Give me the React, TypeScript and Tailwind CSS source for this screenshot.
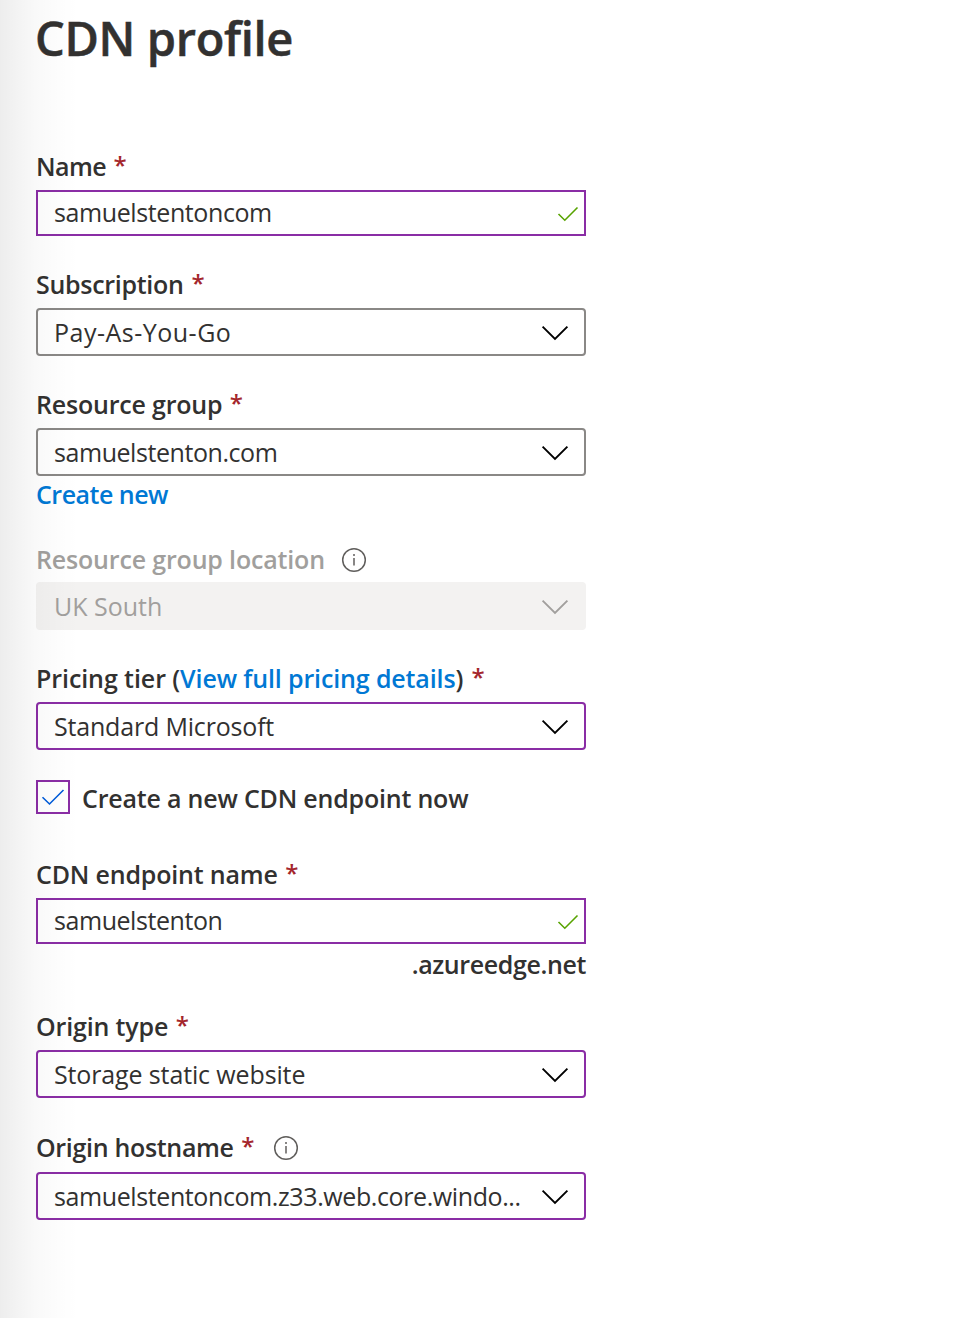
import type { ReactNode } from "react";
import clsx from "clsx";

function Star({ className }: { className?: string }) {
  return <span className={clsx("-mt-px self-start text-[24px]/[36px] font-semibold text-[#a4262c]", className ?? "ml-[7.5px]")}>*</span>;
}

function Label({ children, className }: { children: ReactNode; className?: string }) {
  return (
    <div className={clsx("flex h-9 items-baseline whitespace-pre text-[25px]/[36px] font-semibold", className)}>
      {children}
    </div>
  );
}

function Info({ className }: { className?: string }) {
  return (
    <svg className={clsx("mt-0.5 h-[26px] w-[26px] shrink-0 self-center", className)} viewBox="0 0 26 26" fill="none">
      <circle cx="13" cy="13" r="11.3" stroke="#605e5c" strokeWidth="1.5" />
      <path d="M13 11v7.5" stroke="#605e5c" strokeWidth="1.5" />
      <circle cx="13" cy="8" r="1" fill="#605e5c" />
    </svg>
  );
}

function TextField({ children }: { children: ReactNode }) {
  return (
    <div className="flex h-[46px] items-start justify-between border-2 border-[#8a2da5] pt-0.5 pr-[5px] pl-4 text-[25px]/[36px]">
      {children}
      <svg className="mt-[11px] h-[18px] w-[22px]" viewBox="0 0 22 18" fill="none">
        <path d="M1.5 9 7.8 15.2 20.5 2.5" stroke="#57a300" strokeWidth="1.6" />
      </svg>
    </div>
  );
}

function Select({ children, tone }: { children: ReactNode; tone: "grey" | "purple" | "disabled" }) {
  return (
    <div
      className={clsx(
        "flex h-12 items-center justify-between rounded-[4px] border-2 pr-[15px] pl-4 text-[25px]/[36px]",
        tone === "grey" && "border-[#8a8886]",
        tone === "purple" && "border-[#8a2da5]",
        tone === "disabled" && "border-[#f3f2f1] bg-[#f3f2f1] text-[#a19f9d]",
      )}
    >
      {children}
      <svg className="mt-0.5 h-4 w-[28px] shrink-0" viewBox="0 0 28 16" fill="none">
        <path
          d="M1.6 1.6 14 13.9 26.4 1.6"
          stroke={tone === "disabled" ? "#a19f9d" : "#000000"}
          strokeWidth="1.9"
        />
      </svg>
    </div>
  );
}

export default function App() {
  return (
    <main className="relative h-[1318px] w-[960px] overflow-hidden bg-white pt-[5px] pl-9 font-['Open_Sans','Noto_Sans',sans-serif] text-[#323130]">
      <h1 className="-ml-px text-[47px]/[66px] font-semibold tracking-[-0.35px] [-webkit-text-stroke:0.5px_#323130]">
        CDN profile
      </h1>

      <form className="mt-[77px] flex w-[550px] flex-col">
        <Label className="mb-1.5">
          <span className="tracking-[-0.58px]">Name</span>
          <Star />
        </Label>
        <TextField>
          <span className="tracking-[-0.4px]">samuelstentoncom</span>
        </TextField>

        <Label className="mt-[30px] mb-1.5">
          <span className="tracking-[-0.3px]">Subscription</span>
          <Star className="ml-2" />
        </Label>
        <Select tone="grey">
          <span className="tracking-[0.5px]">Pay-As-You-Go</span>
        </Select>

        <Label className="mt-[30px] mb-1.5">
          <span className="tracking-[-0.2px]">Resource group</span>
          <Star />
        </Label>
        <Select tone="grey">
          <span className="tracking-[-0.44px]">samuelstenton.com</span>
        </Select>
        <Label className="text-[#0078d4]">
          <a className="tracking-[-0.5px]">Create new</a>
        </Label>

        <Label className="mt-[29px] mb-[5px]">
          <span className="tracking-[-0.17px] text-[#a19f9d]">Resource group location</span>
          <Info className="ml-4" />
        </Label>
        <Select tone="disabled">
          <span>UK South</span>
        </Select>

        <Label className="mt-[30px] mb-1.5">
          <span className="tracking-[-0.08px]">Pricing tier (</span>
          <a className="tracking-[-0.13px] text-[#0078d4]">View full pricing details</a>
          <span>)</span>
          <Star className="ml-2" />
        </Label>
        <Select tone="purple">
          <span className="tracking-[-0.18px]">Standard Microsoft</span>
        </Select>

        <div className="mt-[30px] flex h-[34px] items-center">
          <div className="flex h-[34px] w-[34px] items-center justify-center border-2 border-[#8a2da5]">
            <svg className="h-[18px] w-6" viewBox="0 0 24 18" fill="none">
              <path d="M1.5 9.2 8.5 16 22.5 2" stroke="#015cda" strokeWidth="1.6" />
            </svg>
          </div>
          <Label className="mt-[2px] ml-3">
            <span className="tracking-[-0.2px]">Create a new CDN endpoint now</span>
          </Label>
        </div>

        <Label className="mt-[42px] mb-1.5">
          <span className="tracking-[-0.18px]">CDN endpoint name</span>
          <Star />
        </Label>
        <TextField>
          <span className="tracking-[-0.44px]">samuelstenton</span>
        </TextField>
        <Label className="mt-0.5 justify-end">
          <span className="tracking-[-0.38px]">.azureedge.net</span>
        </Label>

        <Label className="mt-[26px] mb-1.5">
          <span className="tracking-[-0.15px]">Origin type</span>
          <Star />
        </Label>
        <Select tone="purple">
          <span className="tracking-[-0.13px]">Storage static website</span>
        </Select>

        <Label className="mt-[31px] mb-[7px]">
          <span className="tracking-[-0.32px]">Origin hostname</span>
          <Star />
          <Info className="ml-[19px]" />
        </Label>
        <Select tone="purple">
          <span className="tracking-[-0.4px]">samuelstentoncom.z33.web.core.windo...</span>
        </Select>
      </form>

      <div className="pointer-events-none absolute inset-y-0 left-0 w-20 bg-[linear-gradient(to_right,rgba(0,0,0,0.07),rgba(0,0,0,0.045)_25%,rgba(0,0,0,0.022)_45%,rgba(0,0,0,0.008)_75%,transparent)]" />
    </main>
  );
}
